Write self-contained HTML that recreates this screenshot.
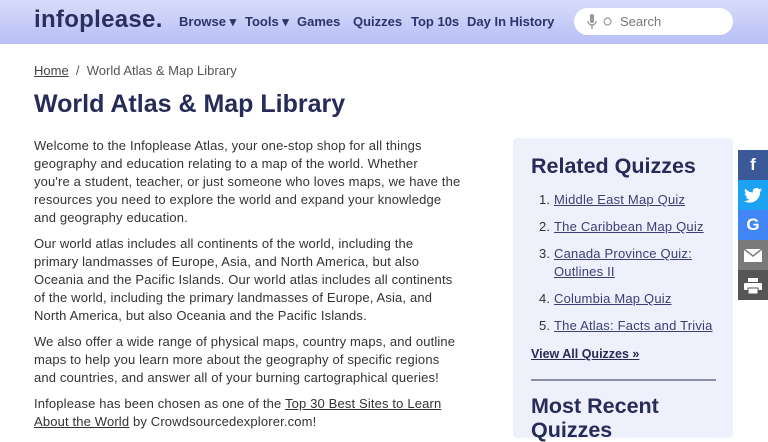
<!DOCTYPE html>
<html><head><meta charset="utf-8"><style>
*{box-sizing:border-box;margin:0;padding:0}
body{width:768px;height:432px;overflow:hidden;background:#fff;font-family:"Liberation Sans",sans-serif;color:#333;position:relative}
.hdr{position:absolute;left:0;top:0;width:768px;height:44px;background:linear-gradient(180deg,#d8dcfa,#b7bff5)}
.logo{position:absolute;left:34px;top:6px;font-size:24px;font-weight:bold;color:#2a2f5e;letter-spacing:0.3px}
.nav{position:absolute;top:14px;font-size:13px;font-weight:bold;color:#2d336b}
.search{position:absolute;left:574px;top:8px;width:159px;height:27px;background:#fff;border-radius:14px}
.search span{position:absolute;left:46px;top:6px;font-size:13px;color:#777}
.bc{position:absolute;left:34px;top:63px;font-size:13px;color:#555}
.bc a{color:#444;text-decoration:underline}
h1{position:absolute;left:34px;top:90px;font-size:25px;color:#262b57;font-weight:bold}
.main{position:absolute;left:34px;top:137px;width:470px;font-size:13px;line-height:18px;color:#333;white-space:nowrap;letter-spacing:0.15px}
.main p{margin-bottom:8px}
.main a{color:#333;text-decoration:underline}
.side{position:absolute;left:513px;top:138px;width:220px;height:300px;background:#eef0fc;border-radius:4px}
.side h2{position:absolute;left:18px;top:16px;font-size:21.5px;color:#262b57}
.side ol{position:absolute;left:41px;top:53px;width:180px;font-size:13px;line-height:18px;color:#333;letter-spacing:0.2px}
.side li{margin-bottom:9px}
.side li a{color:#3a3f75;text-decoration:underline}
.va{position:absolute;left:18px;top:209px;font-size:12.5px;font-weight:bold;color:#262b57;text-decoration:underline}
.hr{position:absolute;left:18px;top:241px;width:185px;height:2px;background:#8a8fa8}
.side h3{position:absolute;left:18px;top:256px;font-size:21.5px;color:#262b57;line-height:24px}
.soc{position:absolute;left:738px;width:30px;height:30px;color:#fff;text-align:center;font-weight:bold;font-size:17px;line-height:30px}
</style></head><body>
<div class="hdr">
<div class="logo">infoplease.</div>
<div class="nav" style="left:179px">Browse ▾</div>
<div class="nav" style="left:245px">Tools ▾</div>
<div class="nav" style="left:297px">Games</div>
<div class="nav" style="left:353px">Quizzes</div>
<div class="nav" style="left:411px">Top 10s</div>
<div class="nav" style="left:467px">Day In History</div>
<div class="search">
<svg style="position:absolute;left:13px;top:6px" width="10" height="16" viewBox="0 0 10 16"><rect x="3" y="0" width="4" height="9" rx="2" fill="#999"/><path d="M1 7a4 4 0 0 0 8 0M5 11v4" stroke="#999" stroke-width="1.4" fill="none"/></svg>
<svg style="position:absolute;left:29px;top:9px" width="9" height="9"><circle cx="4.5" cy="4.5" r="3.5" stroke="#999" fill="none" stroke-width="1.2"/></svg>
<span>Search</span></div>
</div>
<div class="bc"><a>Home</a> &nbsp;/&nbsp; World Atlas &amp; Map Library</div>
<h1>World Atlas &amp; Map Library</h1>
<div class="main">
<p>Welcome to the Infoplease Atlas, your one-stop shop for all things<br>geography and education relating to a map of the world. Whether<br>you're a student, teacher, or just someone who loves maps, we have the<br>resources you need to explore the world and expand your knowledge<br>and geography education.</p>
<p>Our world atlas includes all continents of the world, including the<br>primary landmasses of Europe, Asia, and North America, but also<br>Oceania and the Pacific Islands. Our world atlas includes all continents<br>of the world, including the primary landmasses of Europe, Asia, and<br>North America, but also Oceania and the Pacific Islands.</p>
<p>We also offer a wide range of physical maps, country maps, and outline<br>maps to help you learn more about the geography of specific regions<br>and countries, and answer all of your burning cartographical queries!</p>
<p>Infoplease has been chosen as one of the <a>Top 30 Best Sites to Learn</a><br><a>About the World</a> by Crowdsourcedexplorer.com!</p>
</div>
<div class="side">
<h2>Related Quizzes</h2>
<ol>
<li><a>Middle East Map Quiz</a></li>
<li><a>The Caribbean Map Quiz</a></li>
<li><a>Canada Province Quiz:<br>Outlines II</a></li>
<li><a>Columbia Map Quiz</a></li>
<li><a>The Atlas: Facts and Trivia</a></li>
</ol>
<div class="va">View All Quizzes »</div>
<div class="hr"></div>
<h3>Most Recent<br>Quizzes</h3>
</div>
<div class="soc" style="top:150px;background:#3b5998">f</div>
<div class="soc" style="top:180px;background:#1da1f2"><svg width="18" height="15" viewBox="0 0 24 20" style="vertical-align:middle"><path d="M24 2.4a10 10 0 0 1-2.8.8A5 5 0 0 0 23.3.4a10 10 0 0 1-3.1 1.2A4.9 4.9 0 0 0 11.8 6 14 14 0 0 1 1.7.9a4.9 4.9 0 0 0 1.5 6.6A4.9 4.9 0 0 1 1 6.9a4.9 4.9 0 0 0 3.9 4.9 5 5 0 0 1-2.2.1 4.9 4.9 0 0 0 4.6 3.4A9.9 9.9 0 0 1 0 17.3 14 14 0 0 0 7.5 19.5c9 0 14-7.5 14-14v-.6A10 10 0 0 0 24 2.4z" fill="#fff"/></svg></div>
<div class="soc" style="top:210px;background:#4285f4">G</div>
<div class="soc" style="top:240px;background:#7a7a7a"><svg width="18" height="13" viewBox="0 0 18 13" style="vertical-align:middle"><rect width="18" height="13" fill="#fff"/><path d="M0 0l9 7 9-7" stroke="#7a7a7a" stroke-width="1.5" fill="none"/></svg></div>
<div class="soc" style="top:270px;background:#555"><svg width="18" height="16" viewBox="0 0 18 16" style="vertical-align:middle"><rect x="4" y="0" width="10" height="4" fill="#fff"/><rect x="0" y="5" width="18" height="7" rx="1" fill="#fff"/><rect x="4" y="10" width="10" height="6" fill="#fff" stroke="#555" stroke-width="1"/></svg></div>
</body></html>
